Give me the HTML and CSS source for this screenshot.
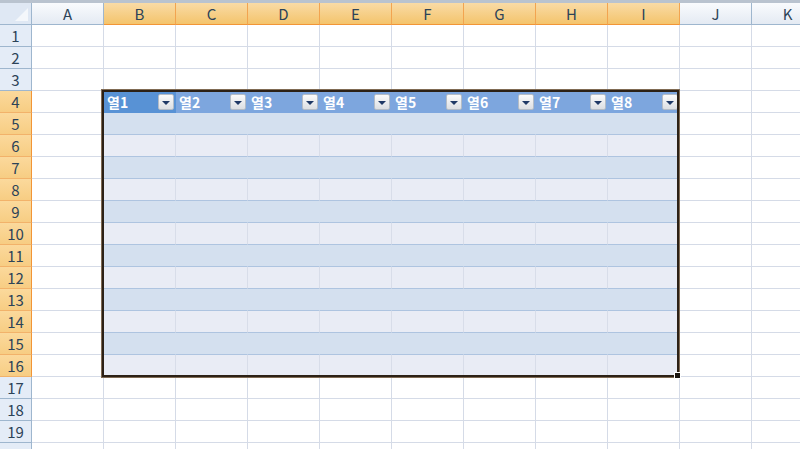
FILE: index.html
```html
<!DOCTYPE html>
<html lang="ko">
<head>
    <meta charset="UTF-8">
    <title>시트1</title>
    <link rel="stylesheet" href="styles.css">
</head>
<body>

<div class="topbar"></div>

<div class="wrap">
    <div class="sheet" id="sheet"></div>
    <div class="selection"><span class="handle"></span></div>
</div>

<script>
    const letters = ['A', 'B', 'C', 'D', 'E', 'F', 'G', 'H', 'I', 'J', 'K'];
    const sheet = document.getElementById("sheet");

    function add(cls, text) {
        const div = document.createElement("div");
        div.className = cls;
        if (text) div.textContent = text;
        sheet.appendChild(div);
        return div;
    }

    // column headers
    add("corner");
    letters.forEach((l, i) => {
        add(i >= 1 && i <= 8 ? "colhead sel" : "colhead", l);
    });

    // rows
    for (let r = 1; r <= 20; r++) {
        const inTable = r >= 4 && r <= 16;
        add(inTable ? "rowhead sel" : "rowhead", String(r));

        for (let c = 0; c < letters.length; c++) {
            if (!inTable || c < 1 || c > 8) {
                add("cell");
                continue;
            }
            if (r === 4) {
                const th = add(c === 1 ? "cell th active" : "cell th");
                const label = document.createElement("span");
                label.textContent = "열" + c;
                const btn = document.createElement("span");
                btn.className = "drop";
                th.appendChild(label);
                th.appendChild(btn);
            } else {
                add(r % 2 === 1 ? "cell band" : "cell plain");
            }
        }
    }
</script>

</body>
</html>
```

FILE: styles.css
```css
body {
    margin: 0;
    width: 800px;
    height: 449px;
    overflow: hidden;
    background: #fff;
    font-family: "Noto Sans CJK KR", "Noto Sans", sans-serif;
}

.topbar {
    height: 3px;
    background: #b9c3cf;
}

.wrap {
    position: relative;
}

.sheet {
    display: grid;
    grid-template-columns: 32px repeat(11, 72px);
    grid-auto-rows: 22px;
    width: 824px;
}

.sheet > div {
    box-sizing: border-box;
    border-right: 1px solid #d5dbe7;
    border-bottom: 1px solid #d5dbe7;
}

.corner {
    position: relative;
    background: #dfe8f4;
    border-color: #9eb6ce !important;
}

.corner::after {
    content: "";
    position: absolute;
    right: 3px;
    bottom: 3px;
    width: 0;
    height: 0;
    border-left: 13px solid transparent;
    border-bottom: 13px solid #f4f7fb;
}

.colhead,
.rowhead {
    display: flex;
    align-items: center;
    justify-content: center;
    font-size: 15px;
    color: #2c4358;
    border-color: #9eb6ce !important;
}

.colhead {
    background: linear-gradient(#f9fbfd, #e4eaf3);
}

.rowhead {
    background: #e4ecf7;
}

.colhead.sel {
    background: linear-gradient(#f9dba6, #f4c46c);
    border-color: #f2a450 !important;
    border-bottom-color: #f29536 !important;
}

.rowhead.sel {
    background: linear-gradient(#fbd99c, #f7cd83);
    border-color: #f2b26a !important;
    border-right-color: #f29536 !important;
}

.cell {
    background: #fff;
}

.th {
    display: flex;
    align-items: center;
    justify-content: space-between;
    padding: 0 1px 0 3px;
    background: #7da6de;
    border-color: transparent !important;
    color: #fff;
    font-weight: bold;
    font-size: 14px;
}

.th.active {
    background: #5892d5;
}

.drop {
    position: relative;
    width: 16px;
    height: 16px;
    box-sizing: border-box;
    border: 1px solid #b4bcc6;
    border-radius: 2px;
    background: linear-gradient(#fbfbfb, #dcdfe3);
}

.drop::after {
    content: "";
    position: absolute;
    left: 3px;
    top: 6px;
    border-left: 4px solid transparent;
    border-right: 4px solid transparent;
    border-top: 4px solid #1f3966;
}

.band {
    background: #d4e0ef;
    border-right-color: #d4e0ef !important;
    border-bottom-color: #aec4e0 !important;
}

.plain {
    background: #e9ecf5;
    border-right-color: #d8dde9 !important;
    border-bottom-color: #aec4e0 !important;
}

.selection {
    position: absolute;
    left: 102px;
    top: 87px;
    width: 577px;
    height: 287px;
    box-sizing: border-box;
    border: 2px solid #2c2116;
    box-shadow: 0 0 0 1px #806b54;
    pointer-events: none;
}

.handle {
    position: absolute;
    right: -4px;
    bottom: -4px;
    width: 5px;
    height: 5px;
    background: #1a1510;
    border: 1px solid #fff;
}
```
